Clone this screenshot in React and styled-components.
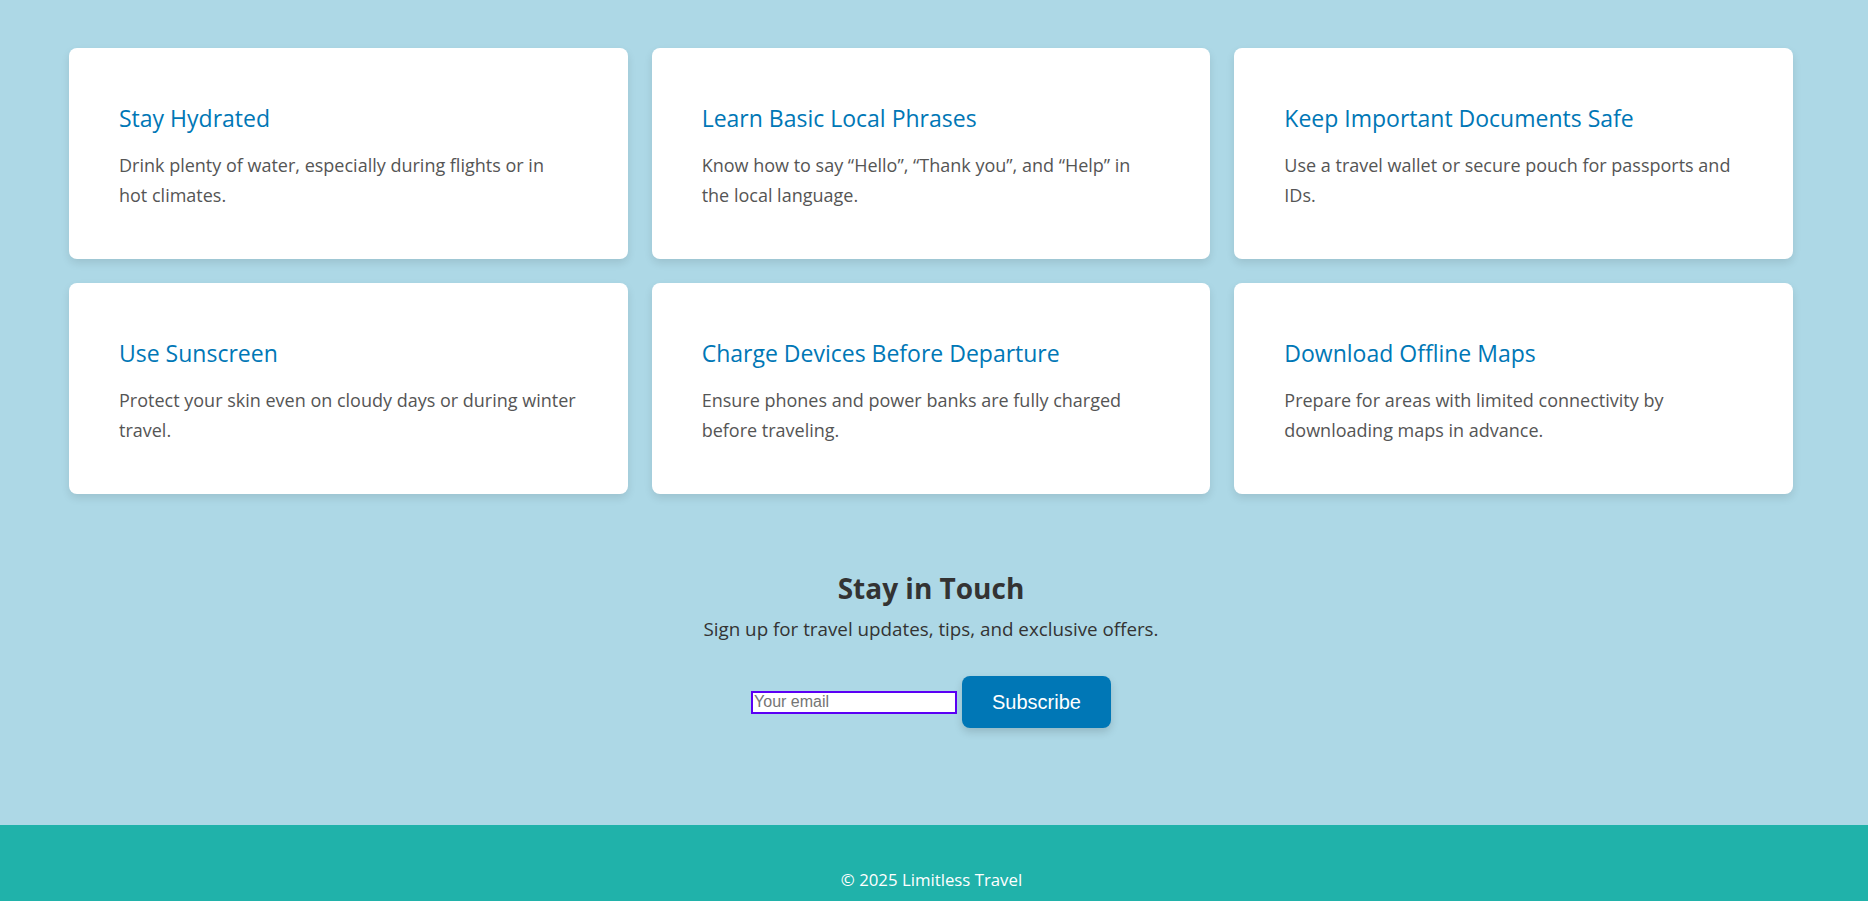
import React from "react";
import styled, { createGlobalStyle } from "styled-components";

const TIPS = [
  {
    title: "Stay Hydrated",
    text: "Drink plenty of water, especially during flights or in hot climates.",
  },
  {
    title: "Learn Basic Local Phrases",
    text: "Know how to say \u201cHello\u201d, \u201cThank you\u201d, and \u201cHelp\u201d in the local language.",
  },
  {
    title: "Keep Important Documents Safe",
    text: "Use a travel wallet or secure pouch for passports and IDs.",
  },
  {
    title: "Use Sunscreen",
    text: "Protect your skin even on cloudy days or during winter travel.",
  },
  {
    title: "Charge Devices Before Departure",
    text: "Ensure phones and power banks are fully charged before traveling.",
  },
  {
    title: "Download Offline Maps",
    text: "Prepare for areas with limited connectivity by downloading maps in advance.",
  },
];

export default function App() {
  return (
    <>
      <GlobalStyle />
      <Main>
        <TipsGrid>
          {TIPS.map((tip) => (
            <TipCard key={tip.title}>
              <TipTitle>{tip.title}</TipTitle>
              <TipText>{tip.text}</TipText>
            </TipCard>
          ))}
        </TipsGrid>

        <Newsletter>
          <h2>Stay in Touch</h2>
          <p>Sign up for travel updates, tips, and exclusive offers.</p>
          <SignupForm onSubmit={(e) => e.preventDefault()}>
            <EmailInput type='email' placeholder='Your email' />
            <SubscribeButton type='submit'>Subscribe</SubscribeButton>
          </SignupForm>
        </Newsletter>
      </Main>
      <Footer>
        <p>&copy; 2025 Limitless Travel</p>
      </Footer>
    </>
  );
}

const GlobalStyle = createGlobalStyle`
  * {
    box-sizing: border-box;
  }

  body {
    margin: 0;
    background: #add8e6;
    font-family: "Open Sans", "Noto Sans", sans-serif;
    color: #333;
  }
`;

const Main = styled.main`
  padding: 48px 75px 0 69px;
`;

const TipsGrid = styled.section`
  display: grid;
  grid-template-columns: repeat(3, 1fr);
  gap: 24px;
`;

const TipCard = styled.article`
  background: #fff;
  border-radius: 8px;
  box-shadow: 0 4px 8px rgba(0, 0, 0, 0.1);
  padding: 56px 52px 48px 50px;
  min-height: 211px;
`;

const TipTitle = styled.h3`
  margin: 0 0 17px;
  font-size: 23px;
  font-weight: 400;
  line-height: 29px;
  color: #0077b6;
`;

const TipText = styled.p`
  margin: 0;
  font-size: 18px;
  line-height: 30px;
  color: #555;
`;

const Newsletter = styled.section`
  text-align: center;
  padding: 75px 0 97px;

  h2 {
    margin: 0 0 9px;
    font-size: 28px;
    line-height: 38px;
    font-weight: 700;
    color: #333;
  }

  p {
    margin: 0;
    font-size: 18.8px;
    line-height: 26px;
    color: #333;
  }
`;

const SignupForm = styled.form`
  display: flex;
  justify-content: center;
  align-items: center;
  gap: 5px;
  margin-top: 34px;
`;

const EmailInput = styled.input`
  width: 206px;
  height: 23px;
  padding: 0 1px;
  border: 2px solid #5b00f5;
  font-family: "Liberation Sans", Arial, sans-serif;
  font-size: 16px;
  color: #333;
  background: #fff;

  &::placeholder {
    color: #757575;
  }
`;

const SubscribeButton = styled.button`
  height: 52px;
  padding: 0 30px;
  border: none;
  border-radius: 8px;
  background: #0077b6;
  color: #fff;
  font-family: "Liberation Sans", Arial, sans-serif;
  font-size: 20px;
  box-shadow: 0 4px 8px rgba(0, 0, 0, 0.15);
  cursor: pointer;
`;

const Footer = styled.footer`
  background: #20b2aa;
  color: #fff;
  text-align: center;
  padding: 44px 5px 44px 0;

  p {
    margin: 0;
    font-size: 16.8px;
    line-height: 22px;
  }
`;
